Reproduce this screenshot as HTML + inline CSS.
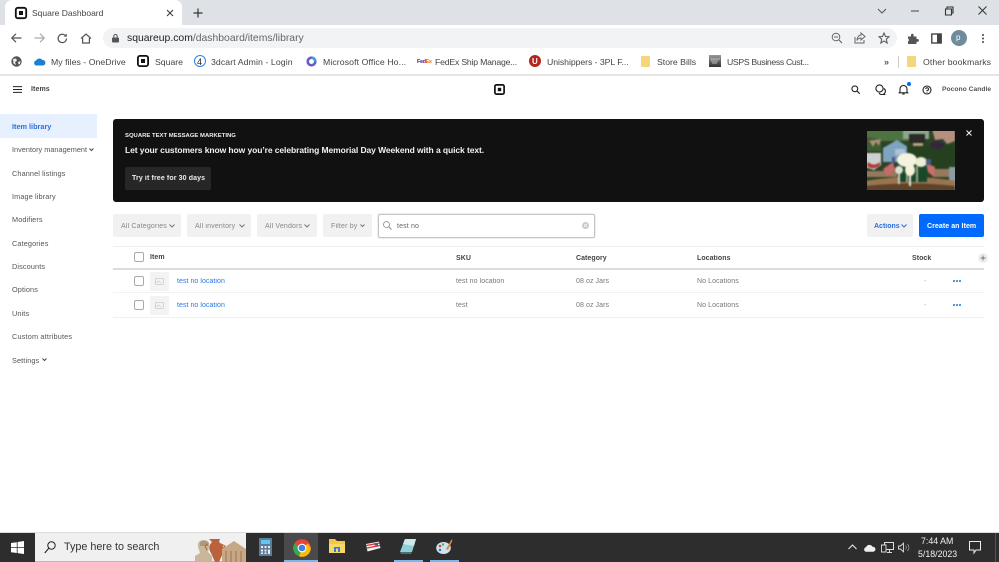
<!DOCTYPE html>
<html><head><meta charset="utf-8"><style>
html,body{margin:0;padding:0;background:#fff}
body{width:999px;height:562px;overflow:hidden;position:relative;font-family:"Liberation Sans",sans-serif}
.t{position:absolute;white-space:nowrap;line-height:12px;font-size:7px;color:#555;filter:blur(.3px)}
.b{position:absolute}
.bm{font-size:8.7px;color:#444}
.nav{left:12px;font-size:7.3px;color:#555;letter-spacing:.12px}
.th{font-size:7px;color:#444;font-weight:bold;letter-spacing:.05px}
.td{font-size:7px;color:#777;letter-spacing:.08px}
.fb{position:absolute;top:214px;height:23px;background:#f1f1f1;border-radius:2px}
svg{position:absolute;overflow:visible}
</style></head><body>

<!-- chrome -->
<div class="b" style="left:0;top:0;width:999px;height:25px;background:#dee1e6"></div>
<div class="b" style="left:5px;top:0;width:177px;height:25px;background:#fff;border-radius:7px 7px 0 0"></div>
<svg style="left:15px;top:7px" width="12" height="12"><rect x=".8" y=".8" width="10.4" height="10.4" rx="2" fill="none" stroke="#111" stroke-width="1.8"/><rect x="4" y="4" width="4" height="4" fill="#111"/></svg>
<div class="t" style="left:32px;top:7px;font-size:8.5px;color:#444">Square Dashboard</div>
<svg style="left:166px;top:9px" width="8" height="8"><path d="M1 1L7 7M7 1L1 7" stroke="#444" stroke-width="1.2"/></svg>
<svg style="left:193px;top:8px" width="10" height="10"><path d="M5 .5V9.5M.5 5H9.5" stroke="#333" stroke-width="1.2"/></svg>
<svg style="left:877px;top:8px" width="10" height="6"><path d="M1 1L5 5L9 1" stroke="#555" fill="none"/></svg>
<svg style="left:911px;top:10px" width="8" height="2"><path d="M0 1H8" stroke="#444"/></svg>
<svg style="left:944px;top:6px" width="10" height="10"><path d="M1.5 3H7.5V9H1.5ZM3 3V1H9V7H7.5" stroke="#333" fill="none" stroke-width="1.1"/></svg>
<svg style="left:978px;top:6px" width="9" height="9"><path d="M.5 .5L8.500 8.500M8.500 .5L.5 8.500" stroke="#333"/></svg>

<!-- toolbar -->
<div class="b" style="left:103px;top:28px;width:794px;height:20px;background:#f1f3f4;border-radius:10px"></div>
<svg style="left:11px;top:33px" width="11" height="10"><path d="M10.5 5H1M5 .8L.8 5L5 9.2" stroke="#555" fill="none" stroke-width="1.2"/></svg>
<svg style="left:34px;top:33px" width="11" height="10"><path d="M.5 5H10M6 .8L10.2 5L6 9.2" stroke="#aaa" fill="none" stroke-width="1.2"/></svg>
<svg style="left:57px;top:33px" width="11" height="11"><path d="M9.5 5.5A4.2 4.2 0 1 1 8.3 2.5" stroke="#555" fill="none" stroke-width="1.2"/><path d="M9.8 .5V3.6H6.7Z" fill="#555"/></svg>
<svg style="left:80px;top:33px" width="12" height="11"><path d="M1 5.5L6 1L11 5.5M2.6 5V10H9.4V5" stroke="#555" fill="none" stroke-width="1.2"/></svg>
<svg style="left:112px;top:34px" width="7" height="9"><rect x="0" y="3.5" width="7" height="5" rx="1" fill="#555"/><path d="M1.8 3.5V2.2A1.7 1.7 0 0 1 5.2 2.2V3.5" stroke="#555" fill="none"/></svg>
<div class="t" style="left:127px;top:33px;font-size:10.4px;color:#222">squareup.com<span style="color:#666">/dashboard/items/library</span></div>
<svg style="left:831px;top:32px" width="12" height="12"><circle cx="5" cy="5" r="3.8" stroke="#666" fill="none"/><path d="M8 8L11 11" stroke="#666" stroke-width="1.2"/><path d="M3 5H7" stroke="#666"/></svg>
<svg style="left:854px;top:32px" width="12" height="12"><path d="M1 5V11H10V8" stroke="#666" fill="none"/><path d="M7 1L11 4.5L7 8V6C4.5 6 3.5 7 3 8.5C3 5.5 4.5 3.3 7 3Z" stroke="#666" fill="none"/></svg>
<svg style="left:878px;top:32px" width="12" height="12"><path d="M6 1L7.5 4.5L11 4.8L8.3 7.2L9.2 11L6 9L2.8 11L3.7 7.2L1 4.8L4.5 4.5Z" stroke="#555" fill="none"/></svg>
<svg style="left:907px;top:33px" width="12" height="12"><path d="M1 3.5H4V2A1.3 1.3 0 0 1 6.6 2V3.5H9.5V6H10.5A1.4 1.4 0 0 1 10.5 8.8H9.5V11H1V8.4A1.5 1.5 0 0 0 1 5.6Z" fill="#555"/></svg>
<svg style="left:931px;top:33px" width="11" height="11"><rect x=".8" y="1" width="9.4" height="9" fill="none" stroke="#444" stroke-width="1.4"/><rect x="6" y="1" width="4" height="9" fill="#444"/></svg>
<div class="b" style="left:951px;top:30px;width:16px;height:16px;background:#6e8c9c;border-radius:50%"></div>
<div class="t" style="left:956px;top:32px;color:#fff;font-size:8px">p</div>
<svg style="left:981px;top:33px" width="4" height="11"><circle cx="2" cy="2" r="1" fill="#444"/><circle cx="2" cy="5.5" r="1" fill="#444"/><circle cx="2" cy="9" r="1" fill="#444"/></svg>

<!-- bookmarks -->
<svg style="left:11px;top:56px" width="11" height="11"><circle cx="5.5" cy="5.5" r="5.2" fill="#555"/><path d="M2 3L5 2.5L6 4.5L4 6L5 9L2.5 7.5ZM7 6L9.5 5L9 8L7.5 8.5Z" fill="#eee"/></svg>
<svg style="left:33px;top:57px" width="13" height="9"><path d="M3 8.5A2.6 2.6 0 0 1 3 3.5A4 4 0 0 1 9.5 3A2.8 2.8 0 0 1 10.3 8.5Z" fill="#1b7fd6"/></svg>
<div class="t bm" style="left:51px;top:56px;letter-spacing:.05px">My files - OneDrive</div>
<svg style="left:137px;top:55px" width="12" height="12"><rect x=".9" y=".9" width="10.2" height="10.2" rx="2" fill="none" stroke="#111" stroke-width="1.8"/><rect x="4" y="4" width="4" height="4" fill="#111"/></svg>
<div class="t bm" style="left:155px;top:56px">Square</div>
<div class="b" style="left:194px;top:55px;width:10px;height:10px;border:1.2px solid #2f80e4;border-radius:50%"></div>
<div class="t" style="left:197px;top:56px;font-size:9px;color:#222">4</div>
<div class="t bm" style="left:211px;top:56px;letter-spacing:.1px">3dcart Admin - Login</div>
<svg style="left:306px;top:56px" width="11" height="11"><circle cx="5.5" cy="5.5" r="3.8" fill="none" stroke="#6a5ac8" stroke-width="2.6"/><path d="M5.5 1.7A3.8 3.8 0 0 1 9.3 5.5" stroke="#3aa0dc" fill="none" stroke-width="2.6"/></svg>
<div class="t bm" style="left:323px;top:56px;letter-spacing:.1px">Microsoft Office Ho...</div>
<div class="t" style="left:417px;top:56px;font-size:5.5px;font-weight:bold;color:#4d148c;letter-spacing:-.4px">Fed<span style="color:#f60">Ex</span></div>
<div class="t bm" style="left:435px;top:56px;letter-spacing:-.2px">FedEx Ship Manage...</div>
<div class="b" style="left:529px;top:55px;width:12px;height:12px;background:#b3261e;border-radius:50%"></div>
<div class="t" style="left:532px;top:56px;font-size:8px;font-weight:bold;color:#fff">U</div>
<div class="t bm" style="left:547px;top:56px;letter-spacing:-.05px">Unishippers - 3PL F...</div>
<div class="b" style="left:641px;top:56px;width:9px;height:11px;background:#f6d67a;border-radius:1px"></div>
<div class="t bm" style="left:657px;top:56px">Store Bills</div>
<div class="b" style="left:709px;top:55px;width:12px;height:12px;background:linear-gradient(#999,#333)"></div>
<svg style="left:710px;top:58px" width="10" height="6"><path d="M0 1H10M1 3H8M2 5H7" stroke="#ddd" stroke-width=".7"/></svg>
<div class="t bm" style="left:727px;top:56px;letter-spacing:-.34px">USPS Business Cust...</div>
<div class="t" style="left:884px;top:56px;font-size:9px;color:#555;font-weight:bold">»</div>
<div class="b" style="left:898px;top:56px;width:1px;height:12px;background:#ccc"></div>
<div class="b" style="left:907px;top:56px;width:9px;height:11px;background:#f6d67a;border-radius:1px"></div>
<div class="t bm" style="left:923px;top:56px;letter-spacing:.1px">Other bookmarks</div>
<div class="b" style="left:0;top:74px;width:999px;height:2px;background:#e6e6e6"></div>

<!-- app header -->
<svg style="left:13px;top:86px" width="9" height="7"><path d="M0 .6H9M0 3.5H9M0 6.4H9" stroke="#222"/></svg>
<div class="t" style="left:31px;top:84px;color:#444;font-weight:bold;letter-spacing:.1px">Items</div>
<svg style="left:494px;top:84px" width="11" height="11"><rect x=".9" y=".9" width="9.2" height="9.2" rx="1.5" fill="none" stroke="#111" stroke-width="1.7"/><rect x="3.8" y="3.8" width="3.4" height="3.4" fill="#111"/></svg>
<svg style="left:851px;top:85px" width="9" height="9"><circle cx="3.8" cy="3.8" r="2.9" stroke="#222" fill="none" stroke-width="1.1"/><path d="M6 6L8.7 8.7" stroke="#222" stroke-width="1.2"/></svg>
<svg style="left:875px;top:84px" width="11" height="11"><circle cx="4.5" cy="4.5" r="3.6" stroke="#222" fill="none" stroke-width="1.1"/><path d="M8.8 4.5A3 3 0 0 1 9 9.7L9.6 10.5H6A3 3 0 0 1 4 9" stroke="#222" fill="none" stroke-width="1.1"/></svg>
<svg style="left:899px;top:84px" width="9" height="11"><path d="M1 8V5A3.5 3.5 0 0 1 8 5V8L8.7 8.8H.3Z" stroke="#222" fill="none" stroke-width="1.1"/><path d="M3.4 10H5.6" stroke="#222" stroke-width="1.2"/></svg>
<div class="b" style="left:907px;top:82px;width:4px;height:4px;background:#006aff;border-radius:50%"></div>
<svg style="left:922px;top:85px" width="10" height="10"><circle cx="5" cy="5" r="4" stroke="#222" fill="none" stroke-width="1.1"/><path d="M3.7 4A1.4 1.4 0 1 1 5 5.5V6.2M5 7V7.8" stroke="#222" fill="none"/></svg>
<div class="t" style="left:942px;top:84px;color:#555;font-weight:bold;font-size:6.7px;letter-spacing:.04px">Pocono Candle</div>

<!-- sidebar -->
<div class="b" style="left:0;top:114px;width:97px;height:24px;background:#e6f0ff"></div>
<div class="t nav" style="top:121px;color:#2a6fdb;font-weight:bold;letter-spacing:0">Item library</div>
<div class="t nav" style="top:144px;letter-spacing:.02px">Inventory management</div>
<svg style="left:89px;top:148px" width="5" height="4"><path d="M.5 .5L2.5 2.5L4.5 .5" stroke="#444" fill="none"/></svg>
<div class="t nav" style="top:168px">Channel listings</div>
<div class="t nav" style="top:191px">Image library</div>
<div class="t nav" style="top:214px">Modifiers</div>
<div class="t nav" style="top:238px">Categories</div>
<div class="t nav" style="top:261px">Discounts</div>
<div class="t nav" style="top:284px">Options</div>
<div class="t nav" style="top:308px">Units</div>
<div class="t nav" style="top:331px;letter-spacing:.18px">Custom attributes</div>
<div class="t nav" style="top:355px">Settings</div>
<svg style="left:42px;top:358px" width="5" height="4"><path d="M.5 .5L2.5 2.5L4.5 .5" stroke="#444" fill="none"/></svg>

<!-- banner -->
<div class="b" style="left:113px;top:119px;width:871px;height:83px;background:#111;border-radius:3px"></div>
<div class="t" style="left:125px;top:130px;font-size:5.9px;font-weight:bold;color:#eee;letter-spacing:.02px">SQUARE TEXT MESSAGE MARKETING</div>
<div class="t" style="left:125px;top:144px;font-size:8.5px;font-weight:bold;color:#f2f2f2;letter-spacing:-.08px">Let your customers know how you’re celebrating Memorial Day Weekend with a quick text.</div>
<div class="b" style="left:125px;top:167px;width:86px;height:23px;background:#272727;border-radius:2px"></div>
<div class="t" style="left:132px;top:173px;font-weight:bold;color:#eee;letter-spacing:.12px">Try it free for 30 days</div>
<!-- photo -->
<div class="b" style="left:867px;top:131px;width:88px;height:59px;overflow:hidden">
<svg style="left:0;top:0" width="88" height="59" viewBox="0 0 88 59"><g style="filter:blur(.7px)">
<rect x="-2" y="-2" width="92" height="63" fill="#2c4425"/>
<rect x="-2" y="-2" width="50" height="12" fill="#4f7340"/>
<rect x="36" y="-2" width="26" height="10" fill="#8da68f"/>
<path d="M-2 6L14 8V20H-2Z" fill="#3f5c30"/>
<path d="M1 10L14 8L12 15L9 11L6 16L3 11Z" fill="#a98f78"/>
<path d="M16 31V17L30 9L41 16V31Z" fill="#7fa4c0"/>
<path d="M28 18H38V24H28Z" fill="#aac3d6"/>
<path d="M40 14H88V38H40Z" fill="#24401f"/>
<rect x="42" y="3" width="16" height="9" fill="#2b2a24"/>
<rect x="46" y="12" width="10" height="3" fill="#b79e7f"/>
<path d="M65 -2H88V10L80 13L76 8L68 9Z" fill="#b58f80"/>
<ellipse cx="70" cy="14" rx="7" ry="4" fill="#36263c"/>
<path d="M-2 22H14V34L7 39L-2 36Z" fill="#cdd0cf"/>
<path d="M1 31Q7 36 13 31L13 34Q7 40 0 35Z" fill="#b23a3a"/>
<path d="M-2 40H30V46H-2ZM66 38H88V46H66Z" fill="#96795c"/>
<rect x="82" y="36" width="8" height="24" fill="#8c9aa3"/>
<path d="M-2 62V50Q44 42 88 50V62Z" fill="#9a7450"/>
<path d="M-2 62V55Q44 50 88 55V62Z" fill="#5e4229"/>
<rect x="31" y="35" width="29" height="16" fill="#18482a"/>
<rect x="39" y="35" width="2" height="16" fill="#a0a288"/><rect x="49" y="35" width="2" height="16" fill="#a0a288"/>
<ellipse cx="40" cy="29" rx="10" ry="7" fill="#f4f3e2"/>
<ellipse cx="54" cy="31" rx="6" ry="5" fill="#ebecd4"/>
<ellipse cx="32" cy="39" rx="4" ry="4" fill="#dedfd0"/>
<rect x="31" y="42" width="2" height="11" fill="#cfd0c4"/>
<ellipse cx="43" cy="39" rx="5" ry="6" fill="#f5f2d8"/>
<rect x="42" y="44" width="2" height="11" fill="#e6e6da"/>
<path d="M16 38L26 31L28 39L20 45Z" fill="#c8696b"/>
<path d="M59 32L68 36L67 46L61 41Z" fill="#cb6d6c"/>
<rect x="59" y="28" width="5" height="6" fill="#4a5a85"/>
<rect x="25" y="26" width="3" height="6" fill="#4a5a85"/>
</g></svg></div>
<svg style="left:966px;top:130px" width="6" height="6"><path d="M.5 .5L5.5 5.5M5.5 .5L.5 5.5" stroke="#eee" stroke-width="1.1"/></svg>

<!-- filters -->
<div class="fb" style="left:113px;width:68px"></div>
<div class="t" style="left:121px;top:221px;color:#888;letter-spacing:.17px">All Categories</div>
<svg style="left:169px;top:224px" width="6" height="4"><path d="M.5 .5L3 3L5.500 .5" stroke="#777" fill="none"/></svg>
<div class="fb" style="left:187px;width:64px"></div>
<div class="t" style="left:195px;top:221px;color:#888;letter-spacing:.17px">All inventory</div>
<svg style="left:239px;top:224px" width="6" height="4"><path d="M.5 .5L3 3L5.500 .5" stroke="#777" fill="none"/></svg>
<div class="fb" style="left:257px;width:60px"></div>
<div class="t" style="left:265px;top:221px;color:#888;letter-spacing:.17px">All Vendors</div>
<svg style="left:304px;top:224px" width="6" height="4"><path d="M.5 .5L3 3L5.500 .5" stroke="#777" fill="none"/></svg>
<div class="fb" style="left:323px;width:49px"></div>
<div class="t" style="left:331px;top:221px;color:#888;letter-spacing:.17px">Filter by</div>
<svg style="left:360px;top:224px" width="5" height="4"><path d="M.5 .5L2.500 2.500L4.500 .5" stroke="#777" fill="none"/></svg>
<div class="b" style="left:378px;top:214px;width:215px;height:22px;border:1px solid #c4c4c4;box-shadow:0 0 0 .5px #ddd;border-radius:2px;background:#fff"></div>
<svg style="left:383px;top:221px" width="9" height="9"><circle cx="3.500" cy="3.500" r="3" stroke="#888" fill="none" stroke-width=".8"/><path d="M5.700 5.700L8.500 8.500" stroke="#888"/></svg>
<div class="t" style="left:397px;top:221px;color:#666;letter-spacing:.15px">test no</div>
<div class="b" style="left:582px;top:222px;width:7px;height:7px;background:#c9c9c9;border-radius:50%"></div>
<svg style="left:584px;top:224px" width="3" height="3"><path d="M0 0L3 3M3 0L0 3" stroke="#fff" stroke-width=".7"/></svg>
<div class="fb" style="left:867px;width:46px"></div>
<div class="t" style="left:874px;top:221px;color:#2a6fdb;font-weight:bold;letter-spacing:0">Actions</div>
<svg style="left:901px;top:224px" width="6" height="4"><path d="M.5 .5L3 3L5.500 .5" stroke="#2a6fdb" fill="none"/></svg>
<div class="b" style="left:919px;top:214px;width:65px;height:23px;background:#006aff;border-radius:2px"></div>
<div class="t" style="left:927px;top:221px;color:#fff;font-weight:bold;letter-spacing:.07px">Create an Item</div>

<!-- table -->
<div class="b" style="left:113px;top:246px;width:871px;height:1px;background:#f0f0f0"></div>
<div class="b" style="left:113px;top:268px;width:871px;height:2px;background:#dcdcdc"></div>
<div class="b" style="left:113px;top:292px;width:871px;height:1px;background:#f2f2f2"></div>
<div class="b" style="left:113px;top:317px;width:871px;height:1px;background:#f0f0f0"></div>
<div class="b" style="left:134px;top:252px;width:8px;height:8px;border:1px solid #aaa;border-radius:2px"></div>
<div class="t th" style="left:150px;top:252px">Item</div>
<div class="t th" style="left:456px;top:253px">SKU</div>
<div class="t th" style="left:576px;top:253px">Category</div>
<div class="t th" style="left:697px;top:253px">Locations</div>
<div class="t th" style="left:912px;top:253px">Stock</div>
<div class="b" style="left:978px;top:253px;width:10px;height:10px;background:#eee;border-radius:50%"></div>
<svg style="left:980px;top:255px" width="6" height="6"><path d="M3 .5V5.500M.5 3H5.500" stroke="#777"/></svg>

<div class="b" style="left:134px;top:276px;width:8px;height:8px;border:1px solid #aaa;border-radius:2px"></div>
<div class="b" style="left:150px;top:272px;width:19px;height:19px;background:#f3f3f3;border-radius:2px"></div>
<svg style="left:155px;top:278px" width="9" height="7"><rect x=".5" y=".5" width="8" height="6" rx="1" fill="none" stroke="#ccc" stroke-width=".8"/><path d="M1 5L3.500 3L6 5" stroke="#ccc" fill="none" stroke-width=".7"/></svg>
<div class="t" style="left:177px;top:276px;color:#2a78e4;letter-spacing:.05px">test no location</div>
<div class="t td" style="left:456px;top:276px">test no location</div>
<div class="t td" style="left:576px;top:276px">08 oz Jars</div>
<div class="t td" style="left:697px;top:276px">No Locations</div>
<div class="t td" style="left:924px;top:276px;color:#aaa">-</div>
<svg style="left:953px;top:280px" width="8" height="2"><circle cx="1" cy="1" r="1" fill="#1c6fe0"/><circle cx="4" cy="1" r="1" fill="#1c6fe0"/><circle cx="7" cy="1" r="1" fill="#1c6fe0"/></svg>

<div class="b" style="left:134px;top:300px;width:8px;height:8px;border:1px solid #aaa;border-radius:2px"></div>
<div class="b" style="left:150px;top:296px;width:19px;height:19px;background:#f3f3f3;border-radius:2px"></div>
<svg style="left:155px;top:302px" width="9" height="7"><rect x=".5" y=".5" width="8" height="6" rx="1" fill="none" stroke="#ccc" stroke-width=".8"/><path d="M1 5L3.500 3L6 5" stroke="#ccc" fill="none" stroke-width=".7"/></svg>
<div class="t" style="left:177px;top:300px;color:#2a78e4;letter-spacing:.05px">test no location</div>
<div class="t td" style="left:456px;top:300px">test</div>
<div class="t td" style="left:576px;top:300px">08 oz Jars</div>
<div class="t td" style="left:697px;top:300px">No Locations</div>
<div class="t td" style="left:924px;top:300px;color:#aaa">-</div>
<svg style="left:953px;top:304px" width="8" height="2"><circle cx="1" cy="1" r="1" fill="#1c6fe0"/><circle cx="4" cy="1" r="1" fill="#1c6fe0"/><circle cx="7" cy="1" r="1" fill="#1c6fe0"/></svg>

<!-- taskbar -->
<div class="b" style="left:0;top:532px;width:999px;height:1px;background:#dcdcdc"></div>
<div class="b" style="left:0;top:533px;width:999px;height:29px;background:#2d2d2d"></div>
<svg style="left:11px;top:541px" width="13" height="13"><path d="M0 2L5.800 1.200V6.200H0ZM6.600 1L13 0V6.200H6.600ZM0 7H5.800V12L0 11.200ZM6.600 7H13V13L6.600 12.100Z" fill="#fff"/></svg>
<div class="b" style="left:35px;top:533px;width:211px;height:29px;background:#f0f0f0;box-sizing:border-box;border-bottom:1px solid #bbb"></div>
<svg style="left:44px;top:541px" width="12" height="13"><circle cx="7.500" cy="4.500" r="3.700" stroke="#222" fill="none"/><path d="M4.800 7.200L.8 12" stroke="#222" stroke-width="1.1"/></svg>
<div class="t" style="left:64px;top:541px;font-size:10.8px;color:#333;line-height:13px">Type here to search</div>
<svg style="left:194px;top:539px" width="52" height="23">
<path d="M1 23V17L6 14L4 8Q3 1 10 1Q16 1 15 8L14 13L18 17V23Z" fill="#c9b69b"/>
<path d="M6 3Q10 0 15 4L14 7H6Z" fill="#a8997f"/>
<path d="M15 0H26L25 3Q32 8 29 14L25 23H21L17 14Q13 8 18 3Z" fill="#b9623c"/>
<path d="M14 5L11 7L13 11M27 5L31 7L29 11" stroke="#b9623c" fill="none"/>
<path d="M28 10L40 2L52 10V23H28Z" fill="#c8a884"/>
<path d="M32 12V23M37 12V23M42 12V23M47 12V23" stroke="#937553"/>
</svg>
<div class="b" style="left:284px;top:533px;width:34px;height:29px;background:#4a4a4a"></div>
<div class="b" style="left:284px;top:560px;width:34px;height:2px;background:#76b9ed"></div>
<div class="b" style="left:394px;top:560px;width:29px;height:2px;background:#76b9ed"></div>
<div class="b" style="left:430px;top:560px;width:29px;height:2px;background:#76b9ed"></div>
<svg style="left:259px;top:538px" width="13" height="18"><rect width="13" height="18" fill="#5f7d99"/><rect x="2" y="2" width="9" height="4" fill="#5fc8f0"/><path d="M2 8H4V10H2ZM5.500 8H7.500V10H5.500ZM9 8H11V10H9ZM2 11.500H4V13.500H2ZM5.500 11.500H7.500V13.500H5.500ZM9 11.500H11V16H9ZM2 14.500H4V16H2ZM5.500 14.500H7.500V16H5.500Z" fill="#e8eef3"/></svg>
<svg style="left:293px;top:539px" width="18" height="18" viewBox="0 0 18 18"><circle cx="9" cy="9" r="8.800" fill="#ea4335"/><path d="M9 9L1.300 4.700A8.800 8.800 0 0 0 6 17.300Z" fill="#34a853"/><path d="M9 9L6 17.300A8.800 8.800 0 0 0 17.800 9L15 4.500Z" fill="#fbbc05"/><circle cx="9" cy="9" r="4.400" fill="#fff"/><circle cx="9" cy="9" r="3.300" fill="#3f7fe8"/></svg>
<svg style="left:329px;top:538px" width="16" height="16"><path d="M0 1H6L8 3H16V15H0Z" fill="#f4c93f"/><rect x="0" y="6" width="16" height="9" fill="#f6d768"/><rect x="5" y="9" width="6" height="5" fill="#2a80d2"/><rect x="7" y="10.500" width="2" height="3.500" fill="#f6d768"/></svg>
<svg style="left:365px;top:541px" width="16" height="11"><path d="M1 3L14 .5L15.500 7L2.500 10.500Z" fill="#f0f0f0"/><path d="M1.500 4.500L14.500 2M2 7L15 4.500" stroke="#d33" stroke-width="1.300"/><rect x="9.500" y="2" width="3.500" height="2.500" fill="#3b5fa8"/></svg>
<svg style="left:400px;top:538px" width="16" height="17"><path d="M5 1H16L12 14H0Z" fill="#8fd0d8"/><path d="M5 1H16L14 8L3 6Z" fill="#cfe8ea"/><path d="M0 14H12L11 16H1Z" fill="#4b6d78"/></svg>
<svg style="left:436px;top:538px" width="17" height="17"><ellipse cx="7.500" cy="10" rx="7.300" ry="6" fill="#cfe3ef"/><circle cx="4" cy="8" r="1.300" fill="#d44"/><circle cx="7" cy="6.500" r="1.200" fill="#3b6"/><circle cx="4" cy="12" r="1.200" fill="#36c"/><path d="M10 11L15.500 1.500L16.500 2.500L12 12Z" fill="#d98a3d"/></svg>

<svg style="left:848px;top:544px" width="9" height="6"><path d="M.5 5L4.500 1L8.500 5" stroke="#eee" fill="none"/></svg>
<svg style="left:863px;top:544px" width="13" height="8"><path d="M3 7.800A2.300 2.300 0 0 1 3 3.300A3.500 3.500 0 0 1 9.500 2.800A2.500 2.500 0 0 1 10.300 7.800Z" fill="#eee"/></svg>
<svg style="left:881px;top:542px" width="13" height="12"><path d="M3.500 .5H12.500V7.500H3.500Z" stroke="#ddd" fill="none"/><path d="M.5 3H5V10H.5Z" fill="#2d2d2d" stroke="#ddd" stroke-width=".9"/><path d="M6 10.500H11M8.500 8V10.500" stroke="#ddd"/></svg>
<svg style="left:898px;top:542px" width="12" height="11"><path d="M.5 4H2.500L5.500 1.200V9.800L2.500 7H.5Z" stroke="#ddd" fill="none" stroke-width=".9"/><path d="M7.500 3.500A3 3 0 0 1 7.500 7.500M9.500 2A5 5 0 0 1 9.500 9" stroke="#999" fill="none" stroke-width=".8"/></svg>
<div class="t" style="left:921px;top:535px;font-size:8.800px;color:#f2f2f2;">7:44 AM</div>
<div class="t" style="left:918px;top:548px;font-size:8.800px;color:#f2f2f2;">5/18/2023</div>
<svg style="left:969px;top:541px" width="12" height="13"><path d="M.5 .5H11.500V9H7L5 12V9H.5Z" stroke="#eee" fill="none"/></svg>
<div class="b" style="left:995px;top:533px;width:1px;height:29px;background:#555"></div>
</body></html>
